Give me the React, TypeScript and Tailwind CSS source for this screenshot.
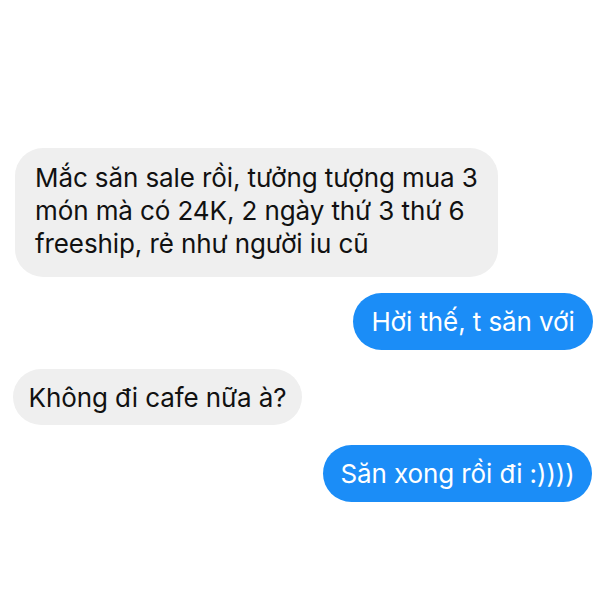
export default function App() {
  return (
    <div
      className="w-[600px] h-[600px] bg-white flex flex-col pt-[148px]"
      style={{ fontFamily: "Inter, 'Noto Sans', sans-serif" }}
    >
      <div className="ml-[15px] w-[483px] h-[129px] rounded-[28px] bg-[#efefef] pl-[20px] pt-[13px] text-[26px] leading-[33px] text-[#111] tracking-[-0.1px]">
        Mắc săn sale rồi, tưởng tượng mua 3
        <br />
        món mà có 24K, 2 ngày thứ 3 thứ 6
        <br />
        freeship, rẻ như người iu cũ
      </div>
      <div className="mt-[16px] self-end mr-[7px] h-[57px] w-[240px] rounded-full bg-[#1b8df7] flex items-center justify-center text-[26px] text-white tracking-[-0.1px]">
        Hời thế, t săn với
      </div>
      <div className="mt-[19px] ml-[13px] h-[56px] w-[289px] rounded-full bg-[#efefef] flex items-center justify-center text-[26px] text-[#111] tracking-[-0.1px]">
        Không đi cafe nữa à?
      </div>
      <div className="mt-[20px] self-end mr-[8px] h-[57px] w-[269px] rounded-full bg-[#1b8df7] flex items-center justify-center text-[26px] text-white tracking-[-0.1px]">
        Săn xong rồi đi :))))
      </div>
    </div>
  );
}
